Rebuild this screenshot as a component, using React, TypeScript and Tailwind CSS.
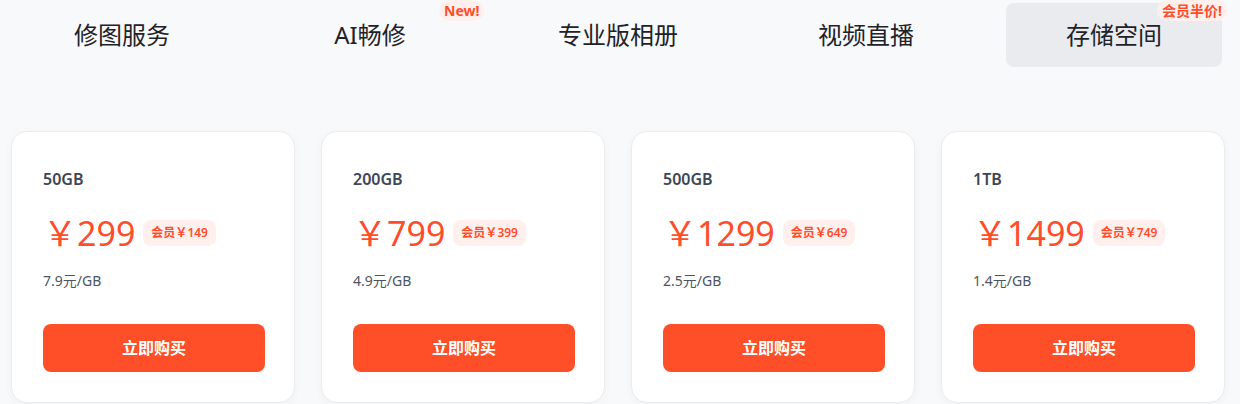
import React from 'react'

const tabs = [
    { name: '修图服务' },
    { name: 'AI畅修', badge: 'New!', badgePos: 'left-[177px]' },
    { name: '专业版相册' },
    { name: '视频直播' },
    { name: '存储空间', badge: '会员半价!', badgePos: 'left-[151px]', active: true },
]

const plans = [
    { size: '50GB', price: '299', member: '149', unit: '7.9元/GB' },
    { size: '200GB', price: '799', member: '399', unit: '4.9元/GB' },
    { size: '500GB', price: '1299', member: '649', unit: '2.5元/GB' },
    { size: '1TB', price: '1499', member: '749', unit: '1.4元/GB' },
]

function App() {
    return (
        <div
            className="h-[404px] w-[1240px] overflow-hidden bg-[#f8f9fb]"
            style={{ fontFamily: '"Noto Sans", "Noto Sans CJK SC", sans-serif' }}
        >
            <div className="flex gap-[32px] pl-[14px] pt-[3px]">
                {tabs.map((tab) => (
                    <div
                        key={tab.name}
                        className={`relative flex h-[64px] w-[216px] items-center justify-center rounded-lg text-[24px] text-[#1f2329] ${tab.active ? 'bg-[#eaebee]' : ''}`}
                    >
                        {tab.name}
                        {tab.badge && (
                            <span
                                className={`absolute top-[-3px] ${tab.badgePos} whitespace-nowrap rounded-full bg-[#fff0ed] px-[5px] text-[14px] leading-[21px] font-bold text-[#ff4d2b]`}
                            >
                                {tab.badge}
                            </span>
                        )}
                    </div>
                ))}
            </div>

            <div className="mt-[64px] flex gap-[26px] pl-[11px]">
                {plans.map((plan) => (
                    <div
                        key={plan.size}
                        className="flex h-[272px] w-[284px] flex-col rounded-2xl border border-[#ececee] bg-white px-[31px] pt-[35px] pb-[30px] shadow-[0_2px_8px_rgba(0,0,0,0.04)]"
                    >
                        <div className="text-[16px] leading-[24px] font-semibold text-[#3d4654]">{plan.size}</div>

                        <div className="mt-[22px] flex h-[40px] items-center">
                            <span className="text-[34px] leading-[40px] text-[#ff4d2b]">￥{plan.price}</span>
                            <span className="ml-[8px] rounded-lg bg-[#fff0ed] px-[8px] text-[12px] leading-[26px] font-semibold text-[#ff4d2b]">
                                会员￥{plan.member}
                            </span>
                        </div>

                        <div className="mt-[18px] text-[14px] leading-[20px] text-[#4b5563]">{plan.unit}</div>

                        <button className="mt-auto h-[48px] w-[222px] rounded-lg bg-[#ff4f28] text-[16px] font-bold text-white">
                            立即购买
                        </button>
                    </div>
                ))}
            </div>
        </div>
    )
}

export default App
